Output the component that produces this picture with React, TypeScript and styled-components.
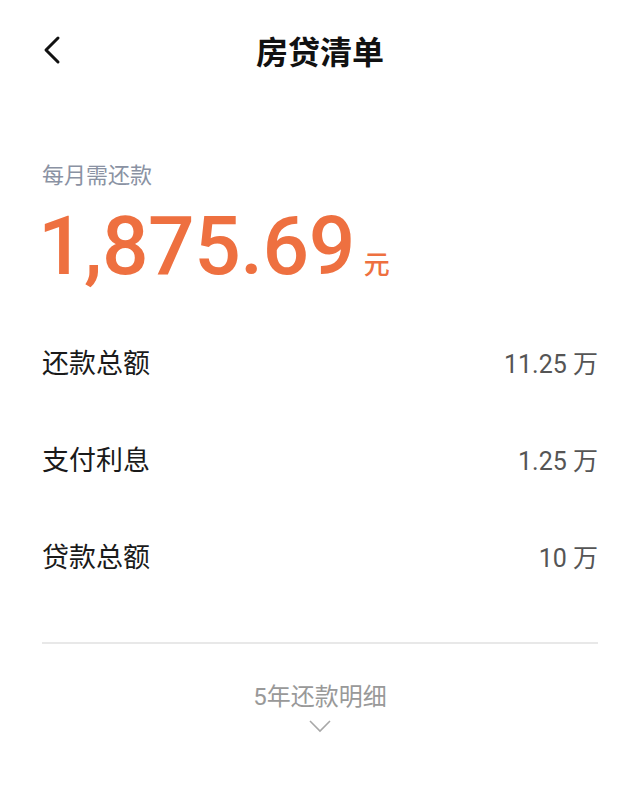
import styled, { createGlobalStyle } from 'styled-components';

const GlobalStyle = createGlobalStyle`
  html, body {
    margin: 0;
    padding: 0;
    background: #ffffff;
  }
  body {
    font-family: Roboto, "Noto Sans CJK SC", "Noto Sans", sans-serif;
    -webkit-font-smoothing: antialiased;
  }
`;

interface SummaryItem {
  label: string;
  value: string;
}

const items: SummaryItem[] = [
  { label: '还款总额', value: '11.25' },
  { label: '支付利息', value: '1.25' },
  { label: '贷款总额', value: '10' },
];

const Page = () => {
  return (
    <Screen>
      <GlobalStyle />
      <Header>
        <BackButton aria-label="返回">
          <svg width="24" height="32" viewBox="0 0 24 32" fill="none">
            <path d="M16 4 L4 16 L16 28" stroke="#111" strokeWidth="3" strokeLinecap="round" strokeLinejoin="round" />
          </svg>
        </BackButton>
        <Title>房贷清单</Title>
      </Header>

      <Monthly>
        <MonthlyLabel>每月需还款</MonthlyLabel>
        <AmountLine>
          <Amount>1,875.69</Amount>
          <Unit>元</Unit>
        </AmountLine>
      </Monthly>

      <List>
        {items.map((item) => (
          <Row key={item.label}>
            <RowLabel>{item.label}</RowLabel>
            <RowValue>{item.value} 万</RowValue>
          </Row>
        ))}
      </List>

      <Divider />

      <Detail>
        <DetailText>5年还款明细</DetailText>
        <svg width="24" height="14" viewBox="0 0 24 14" fill="none">
          <path d="M2 2 L12 12 L22 2" stroke="#a8a8a8" strokeWidth="1.6" />
        </svg>
      </Detail>
    </Screen>
  );
};

const Screen = styled.div`
  width: 640px;
  min-height: 798px;
  padding: 0 42px;
  box-sizing: border-box;
  display: flex;
  flex-direction: column;
`;

const Header = styled.header`
  position: relative;
  height: 100px;
  display: flex;
  align-items: center;
  justify-content: center;
`;

const BackButton = styled.button`
  position: absolute;
  left: 0;
  top: 34px;
  padding: 0;
  border: 0;
  background: none;
  display: flex;
`;

const Title = styled.h1`
  margin: 0;
  font-size: 32px;
  font-weight: 700;
  color: #111;
  letter-spacing: 0;
`;

const Monthly = styled.section`
  display: flex;
  flex-direction: column;
  padding-top: 60px;
`;

const MonthlyLabel = styled.div`
  font-size: 22px;
  line-height: 32px;
  color: #8a92a3;
`;

const AmountLine = styled.div`
  display: flex;
  align-items: baseline;
  gap: 9px;
  margin-top: 9px;
  color: #ee7040;
`;

const Amount = styled.span`
  font-family: Roboto, sans-serif;
  font-size: 82px;
  font-weight: 500;
  line-height: 90px;
  margin-left: -4px;
  letter-spacing: -0.5px;
`;

const Unit = styled.span`
  font-size: 26px;
  font-weight: 500;
`;

const List = styled.section`
  display: flex;
  flex-direction: column;
  margin-top: 22px;
`;

const Row = styled.div`
  height: 97px;
  display: flex;
  align-items: center;
  justify-content: space-between;
`;

const RowLabel = styled.span`
  font-size: 27px;
  color: #1a1a1a;
`;

const RowValue = styled.span`
  font-size: 25px;
  color: #555;
`;

const Divider = styled.hr`
  margin: 38px 0 0;
  border: 0;
  height: 2px;
  background: #e8e8e8;
`;

const Detail = styled.div`
  display: flex;
  flex-direction: column;
  align-items: center;
  padding-top: 37px;
  gap: 6px;
`;

const DetailText = styled.span`
  font-size: 24px;
  line-height: 32px;
  color: #999;
`;

export default function App() {
  return <Page />;
}
